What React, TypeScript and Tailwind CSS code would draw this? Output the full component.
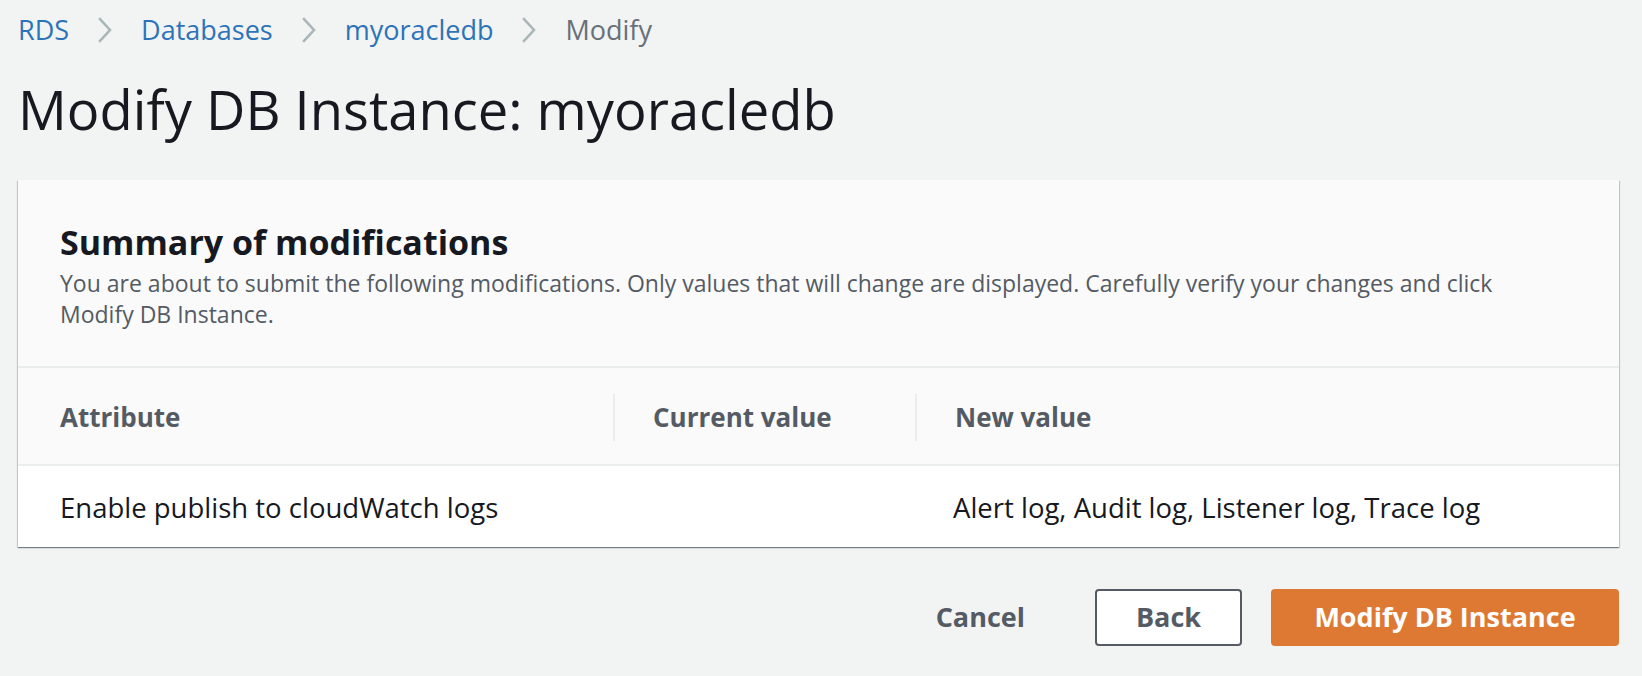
import React from "react";

interface Crumb {
  label: string;
  link: boolean;
}

interface ModRow {
  attribute: string;
  current: string;
  next: string;
}

const crumbs: Crumb[] = [
  { label: "RDS", link: true },
  { label: "Databases", link: true },
  { label: "myoracledb", link: true },
  { label: "Modify", link: false },
];

const rows: ModRow[] = [
  {
    attribute: "Enable publish to cloudWatch logs",
    current: "",
    next: "Alert log, Audit log, Listener log, Trace log",
  },
];

function Chevron() {
  return (
    <svg width="14" height="26" viewBox="0 0 14 26" fill="none" className="shrink-0">
      <path d="M2 2 L12 13 L2 24" stroke="#aab7b8" strokeWidth="2.6" strokeLinecap="square" />
    </svg>
  );
}

export default function App() {
  return (
    <div className="w-full h-[676px] bg-[#f2f3f3] font-['Open_Sans',sans-serif] text-[#16191f] pl-[18px] pr-[23px]">
      {/* Breadcrumbs */}
      <nav className="h-[60px] flex items-center gap-[29px] text-[27px]">
        {crumbs.map((c, i) => (
          <React.Fragment key={c.label}>
            {i > 0 && <Chevron />}
            <span className={c.link ? "text-[#2d73b9]" : "text-[#687078]"}>{c.label}</span>
          </React.Fragment>
        ))}
      </nav>

      {/* Title */}
      <h1 className="h-[100px] flex items-center text-[54.3px] leading-none pb-[2px]">
        Modify DB Instance: myoracledb
      </h1>

      {/* Summary card */}
      <div className="mt-[20px] bg-white shadow-[0_1px_1px_0_rgba(0,28,36,0.35),1px_1px_1px_0_rgba(0,28,36,0.15),-1px_1px_1px_0_rgba(0,28,36,0.15)]">
        <div className="bg-[#fafafa] px-[42px] pt-[36px] pb-[36px] border-b-2 border-[#eaeded]">
          <h2 className="text-[34px] font-bold leading-[52px]">Summary of modifications</h2>
          <p className="text-[23px] leading-[31px] text-[#545b64] pr-[40px]">
            You are about to submit the following modifications. Only values that will change are displayed. Carefully verify your changes and click Modify DB Instance.
          </p>
        </div>

        <table className="w-full border-collapse">
          <thead>
            <tr className="bg-[#fafafa] border-b-2 border-[#eaeded] h-[97px]">
              <th className="w-[595px] text-left pl-[42px] pt-[2px] text-[26px] font-bold text-[#545b64]">Attribute</th>
              <th className="w-[302px] text-left pl-[40px] pt-[2px] text-[26px] font-bold text-[#545b64] relative">
                <span className="absolute left-0 top-[26px] h-[47px] border-l-2 border-[#eaeded]" />
                Current value
              </th>
              <th className="text-left pl-[40px] pt-[2px] text-[26px] font-bold text-[#545b64] relative">
                <span className="absolute left-0 top-[26px] h-[47px] border-l-2 border-[#eaeded]" />
                New value
              </th>
            </tr>
          </thead>
          <tbody>
            {rows.map((r) => (
              <tr key={r.attribute} className="h-[82px]">
                <td className="pl-[42px] pt-[2px] text-[27.5px]">{r.attribute}</td>
                <td className="pl-[40px] pt-[2px] text-[27.5px]">{r.current}</td>
                <td className="pl-[38px] pt-[2px] text-[27.5px]">{r.next}</td>
              </tr>
            ))}
          </tbody>
        </table>
      </div>

      {/* Actions */}
      <div className="mt-[42px] flex items-center justify-end">
        <button className="px-[26px] h-[57px] text-[27px] font-bold text-[#545b64]">Cancel</button>
        <button className="ml-[44px] w-[147px] h-[57px] rounded-[4px] border-2 border-[#545b64] bg-white text-[27px] font-bold text-[#545b64]">
          Back
        </button>
        <button className="ml-[29px] w-[348px] h-[57px] rounded-[4px] bg-[#de7934] text-[27px] font-bold text-white">
          Modify DB Instance
        </button>
      </div>
    </div>
  );
}
